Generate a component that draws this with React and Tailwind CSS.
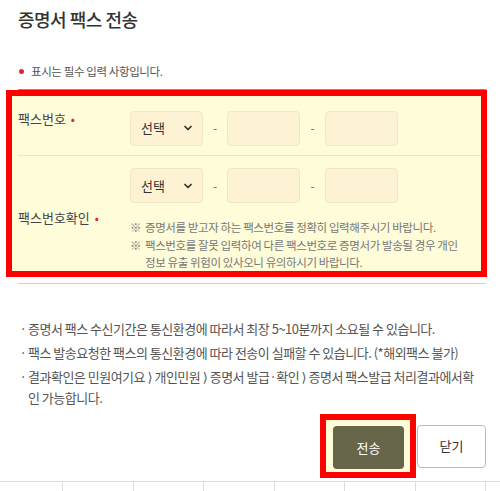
import { ChevronDown } from "lucide-react";

function Dot() {
  return <span className="ml-[5px] text-[12px] text-[#d7282f]">•</span>;
}

function Arrow() {
  return <span style={{ fontFamily: '"DejaVu Sans", sans-serif' }}>⟩</span>;
}

function PhoneInputs() {
  return (
    <div className="flex items-center">
      <div className="flex h-[35px] w-[73px] items-center justify-between rounded-[4px] border border-[#f3e6c4] bg-[#fdf2d3] pl-[10px] pr-[8px] text-[13px] text-[#333]">
        <span>선택</span>
        <ChevronDown size={12} strokeWidth={3.5} className="text-[#333]" />
      </div>
      <span className="w-[24px] text-center text-[12px] text-[#666]">-</span>
      <div className="h-[35px] w-[73px] rounded-[4px] border border-[#f3e6c4] bg-[#fdf2d3]" />
      <span className="w-[25px] text-center text-[12px] text-[#666]">-</span>
      <div className="h-[35px] w-[73px] rounded-[4px] border border-[#f3e6c4] bg-[#fdf2d3]" />
    </div>
  );
}

export default function App() {
  return (
    <div
      className="h-[491px] w-[500px] overflow-hidden bg-white"
      style={{ fontFamily: '"Noto Sans CJK KR", "Noto Sans", sans-serif' }}
    >
      <h1 className="pl-[18px] pt-[6px] text-[18px] font-medium leading-[26px] tracking-[-0.5px] text-[#333]">
        증명서 팩스 전송
      </h1>

      <p className="mt-[30px] flex items-center pl-[18px] text-[11.5px] leading-[18px] tracking-[-0.4px] text-[#555]">
        <span className="mr-[7px] ml-[1px] h-[5px] w-[5px] rounded-full bg-[#d7282f]" />
        표시는 필수 입력 사항입니다.
      </p>

      <div className="ml-[18px] mt-[9px] h-px w-[468px] bg-[#8f8a7a]" />

      <div className="ml-[6px] h-[187px] w-[481px] border-[6px] border-[#ff0000] bg-[#fffcd9] pl-[6px]">
        <div className="flex h-[60px] border-b border-[#ece6c6] pt-[5px]">
          <div className="flex h-[35px] w-[112px] items-center text-[13px] text-[#444]">
            팩스번호
            <Dot />
          </div>
          <PhoneInputs />
        </div>

        <div className="flex">
          <div className="flex w-[112px] items-center pt-[8px] text-[13px] text-[#444]">
            팩스번호확인
            <Dot />
          </div>
          <div className="pt-[12px]">
            <PhoneInputs />
            <div className="mt-[16px] whitespace-nowrap text-[11.5px] leading-[17.5px] tracking-[-0.4px] text-[#777]">
              <div className="flex">
                <span className="w-[15px]">※</span>
                <span>증명서를 받고자 하는 팩스번호를 정확히 입력해주시기 바랍니다.</span>
              </div>
              <div className="flex">
                <span className="w-[15px]">※</span>
                <span>
                  팩스번호를 잘못 입력하여 다른 팩스번호로 증명서가 발송될 경우 개인
                  <br />
                  정보 유출 위험이 있사오니 유의하시기 바랍니다.
                </span>
              </div>
            </div>
          </div>
        </div>
      </div>

      <div className="ml-[18px] mt-[6px] h-px w-[468px] bg-[#cfcfcf]" />

      <ul className="mt-[35px] space-y-[4px] whitespace-nowrap pl-[18px] text-[13px] leading-[20px] tracking-[-0.5px] text-[#555]">
        <li className="flex">
          <span className="w-[10px] shrink-0 text-center">·</span>
          <span>증명서 팩스 수신기간은 통신환경에 따라서 최장 5~10분까지 소요될 수 있습니다.</span>
        </li>
        <li className="flex">
          <span className="w-[10px] shrink-0 text-center">·</span>
          <span>팩스 발송요청한 팩스의 통신환경에 따라 전송이 실패할 수 있습니다. (*해외팩스 불가)</span>
        </li>
        <li className="flex">
          <span className="w-[10px] shrink-0 text-center">·</span>
          <span>
            결과확인은 민원여기요 <Arrow /> 개인민원 <Arrow /> 증명서 발급·확인 <Arrow /> 증명서 팩스발급 처리결과에서확
            <br />인 가능합니다.
          </span>
        </li>
      </ul>

      <div className="mt-[6px] flex items-center justify-end pr-[14px]">
        <div className="border-[6px] border-[#ff0000] bg-[#fffcd9] pb-[3px] pl-[7px] pr-[6px] pt-[6px]">
          <button className="h-[43px] w-[71px] rounded-[4px] bg-[#67654a] text-[13px] text-white">
            전송
          </button>
        </div>
        <button className="ml-px h-[43px] w-[69px] rounded-[4px] border border-[#bbb] bg-white text-[13px] text-[#333]">
          닫기
        </button>
      </div>

      <div className="mt-[3px] flex h-[10px] border-t border-[#ddd]">
        <div className="w-[62px]" />
        {[0, 1, 2, 3, 4, 5].map((c) => (
          <div key={c} className="w-[70.5px] border-l border-[#ddd]" />
        ))}
        <div className="flex-1 border-l border-[#ddd]" />
      </div>
    </div>
  );
}
